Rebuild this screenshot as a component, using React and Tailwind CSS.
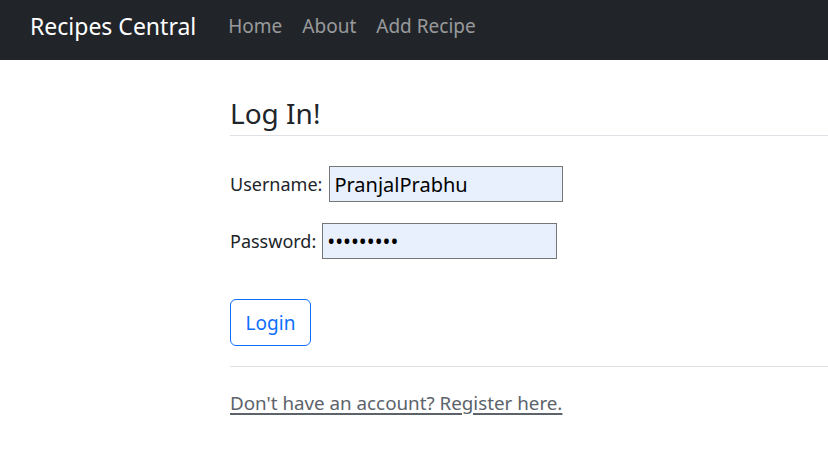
export default function App() {
  return (
    <div className="min-h-screen bg-white" style={{ fontFamily: '"Noto Sans", sans-serif' }}>
      <nav className="h-[60px] bg-[#212529] flex items-center pl-[30px] pb-[8px]">
        <span className="text-[23px] text-white leading-none">Recipes Central</span>
        <div className="flex items-center gap-[20px] ml-[32px] text-[19px] text-[rgba(255,255,255,0.55)] leading-none">
          <span>Home</span>
          <span>About</span>
          <span>Add Recipe</span>
        </div>
      </nav>
      <main className="pl-[230px] pt-[34px]">
        <h2 className="text-[28px] leading-[38px] text-[#212529] font-normal">Log In!</h2>
        <hr className="mt-[3px] border-0 border-t border-[#dee2e6]" />
        <div className="mt-[30px] flex items-center text-[18px] text-[#212529]">
          <label className="mr-[7px]">Username:</label>
          <input className="w-[234px] h-[36px] bg-[#e8f0fe] border border-[#767676] px-[4px] text-[20px] text-black outline-none" defaultValue="PranjalPrabhu" readOnly />
        </div>
        <div className="mt-[21px] flex items-center text-[18px] text-[#212529]">
          <label className="mr-[6px]">Password:</label>
          <input type="password" className="w-[235px] h-[36px] bg-[#e8f0fe] border border-[#767676] px-[4px] text-[21px] text-black outline-none" defaultValue="abcdefghi" readOnly />
        </div>
        <button className="mt-[40px] w-[81px] h-[47px] border border-[#0d6efd] rounded-[6px] text-[#0d6efd] text-[19px] bg-white pt-[2px]">Login</button>
        <hr className="mt-[20px] border-0 border-t border-[#dee2e6]" />
        <a className="block mt-[22px] text-[18.8px] text-[#5c636a] underline decoration-2 underline-offset-[3px]" href="#">Don't have an account? Register here.</a>
      </main>
    </div>
  );
}
